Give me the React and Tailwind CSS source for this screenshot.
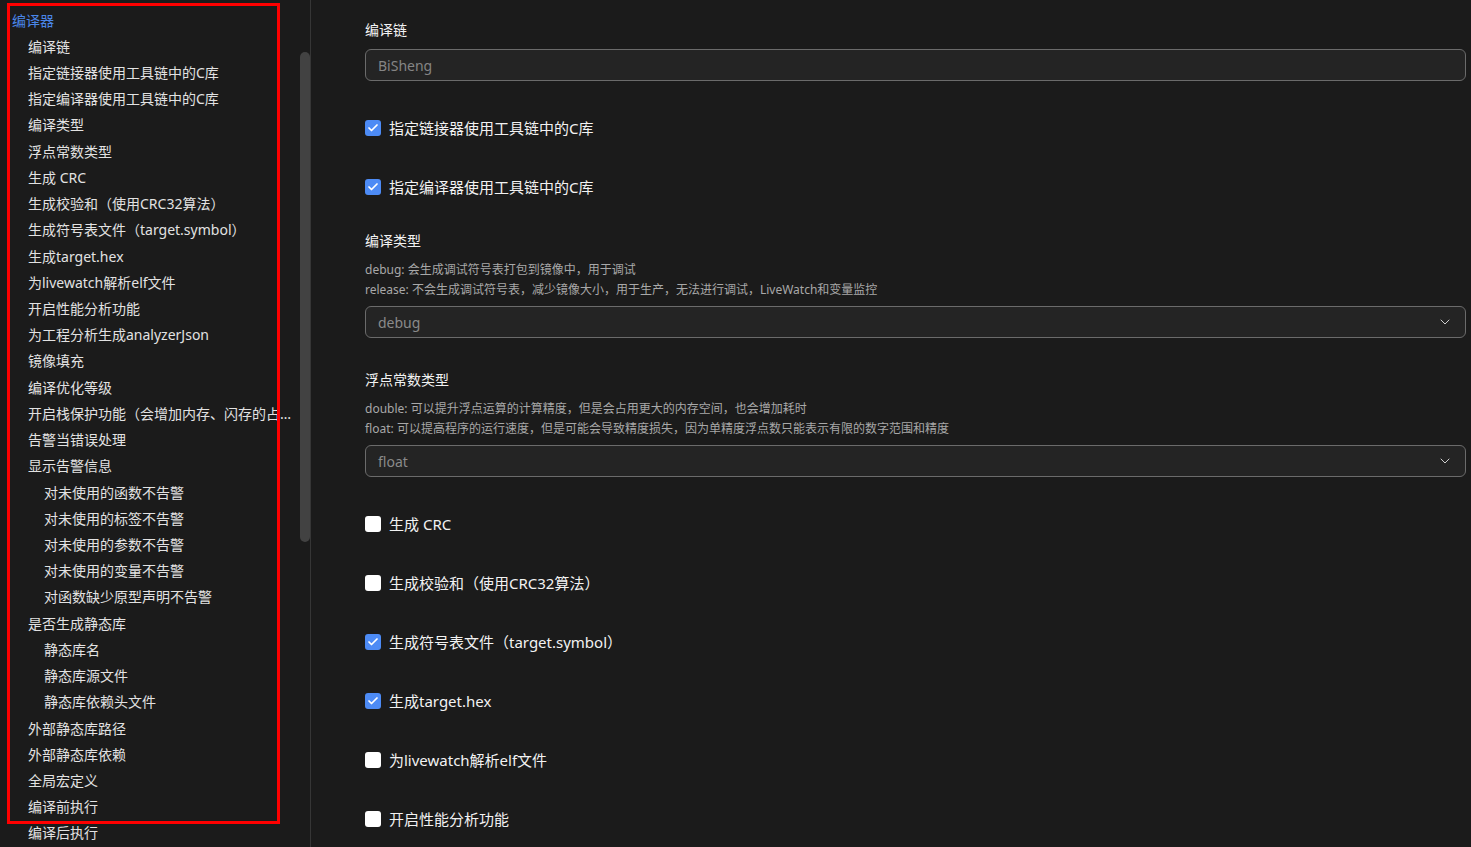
import React from 'react';
import { ChevronDown, Check } from 'lucide-react';

const font = { fontFamily: '"Noto Sans", "Noto Sans CJK SC", sans-serif' };

const navItems = [
    { label: '编译器', level: 0, active: true },
    { label: '编译链', level: 1 },
    { label: '指定链接器使用工具链中的C库', level: 1 },
    { label: '指定编译器使用工具链中的C库', level: 1 },
    { label: '编译类型', level: 1 },
    { label: '浮点常数类型', level: 1 },
    { label: '生成 CRC', level: 1 },
    { label: '生成校验和（使用CRC32算法）', level: 1 },
    { label: '生成符号表文件（target.symbol）', level: 1 },
    { label: '生成target.hex', level: 1 },
    { label: '为livewatch解析elf文件', level: 1 },
    { label: '开启性能分析功能', level: 1 },
    { label: '为工程分析生成analyzerJson', level: 1 },
    { label: '镜像填充', level: 1 },
    { label: '编译优化等级', level: 1 },
    { label: '开启栈保护功能（会增加内存、闪存的占用，以及降低性能）', level: 1 },
    { label: '告警当错误处理', level: 1 },
    { label: '显示告警信息', level: 1 },
    { label: '对未使用的函数不告警', level: 2 },
    { label: '对未使用的标签不告警', level: 2 },
    { label: '对未使用的参数不告警', level: 2 },
    { label: '对未使用的变量不告警', level: 2 },
    { label: '对函数缺少原型声明不告警', level: 2 },
    { label: '是否生成静态库', level: 1 },
    { label: '静态库名', level: 2 },
    { label: '静态库源文件', level: 2 },
    { label: '静态库依赖头文件', level: 2 },
    { label: '外部静态库路径', level: 1 },
    { label: '外部静态库依赖', level: 1 },
    { label: '全局宏定义', level: 1 },
    { label: '编译前执行', level: 1 },
    { label: '编译后执行', level: 1 },
];

const padByLevel = ['pl-3', 'pl-7', 'pl-11'];

const CheckRow = ({ checked, label, className }) => (
    <div className={`flex items-center h-5 ${className}`}>
        {checked ? (
            <span className="w-4 h-4 rounded-[3px] bg-[#4d8bf5] flex items-center justify-center">
                <Check className="w-3 h-3 text-white" strokeWidth={3.5} />
            </span>
        ) : (
            <span className="w-4 h-4 rounded-[3px] bg-white"></span>
        )}
        <span className="ml-2 text-[15px] text-[#f2f2f2]">{label}</span>
    </div>
);

const Label = ({ children, className }) => (
    <div className={`h-[18px] leading-[18px] text-[14px] text-[#f2f2f2] ${className}`}>{children}</div>
);

const Select = ({ value, className }) => (
    <div className={`h-8 rounded-md border border-[#6b6b6b] bg-[#242424] flex items-center justify-between pl-3 pr-3 ${className}`}>
        <span className="text-[14px] text-[#8a8a8a]">{value}</span>
        <ChevronDown className="w-4 h-4 text-[#cfcfcf]" strokeWidth={1.5} />
    </div>
);

const App = () => {
    return (
        <div className="relative h-[847px] w-full overflow-hidden bg-[#1b1b1b] flex" style={font}>
            {/* sidebar */}
            <aside className="relative w-[311px] shrink-0 border-r border-[#363636]">
                <div className="pt-[7px] pr-[16px]">
                    {navItems.map((item, i) => (
                        <div
                            key={i}
                            className={`h-[26.23px] flex items-center text-[14px] ${padByLevel[item.level]} ${item.active ? 'text-[#4a86e8]' : 'text-[#e2e2e2]'}`}
                        >
                            <span className="truncate">{item.label}</span>
                        </div>
                    ))}
                </div>
                <div className="absolute right-0 top-[52px] w-[10px] h-[490px] rounded-full bg-[#424242]"></div>
            </aside>

            {/* settings */}
            <main className="flex-1 pt-[21px] pl-[54px] pr-[5px]">
                <Label>编译链</Label>
                <div className="mt-[10px] h-8 rounded-md border border-[#6b6b6b] bg-[#242424] flex items-center pl-3">
                    <span className="text-[14px] text-[#858585]">BiSheng</span>
                </div>

                <CheckRow checked label="指定链接器使用工具链中的C库" className="mt-[37px]" />
                <CheckRow checked label="指定编译器使用工具链中的C库" className="mt-[39px]" />

                <Label className="mt-[35px]">编译类型</Label>
                <div className="mt-[10px] text-[12px] leading-[20px] text-[#a8a8a8]">
                    <p>debug: 会生成调试符号表打包到镜像中，用于调试</p>
                    <p>release: 不会生成调试符号表，减少镜像大小，用于生产，无法进行调试，LiveWatch和变量监控</p>
                </div>
                <Select value="debug" className="mt-[6px]" />

                <Label className="mt-[33px]">浮点常数类型</Label>
                <div className="mt-[10px] text-[12px] leading-[20px] text-[#a8a8a8]">
                    <p>double: 可以提升浮点运算的计算精度，但是会占用更大的内存空间，也会增加耗时</p>
                    <p>float: 可以提高程序的运行速度，但是可能会导致精度损失，因为单精度浮点数只能表示有限的数字范围和精度</p>
                </div>
                <Select value="float" className="mt-[6px]" />

                <CheckRow label="生成 CRC" className="mt-[37px]" />
                <CheckRow label="生成校验和（使用CRC32算法）" className="mt-[39px]" />
                <CheckRow checked label="生成符号表文件（target.symbol）" className="mt-[39px]" />
                <CheckRow checked label="生成target.hex" className="mt-[39px]" />
                <CheckRow label="为livewatch解析elf文件" className="mt-[39px]" />
                <CheckRow label="开启性能分析功能" className="mt-[39px]" />
            </main>

            {/* annotation box */}
            <div className="absolute left-[7px] top-[3px] w-[273px] h-[821px] border-[3px] border-[#ff0000] pointer-events-none"></div>
        </div>
    );
};

export default App;
